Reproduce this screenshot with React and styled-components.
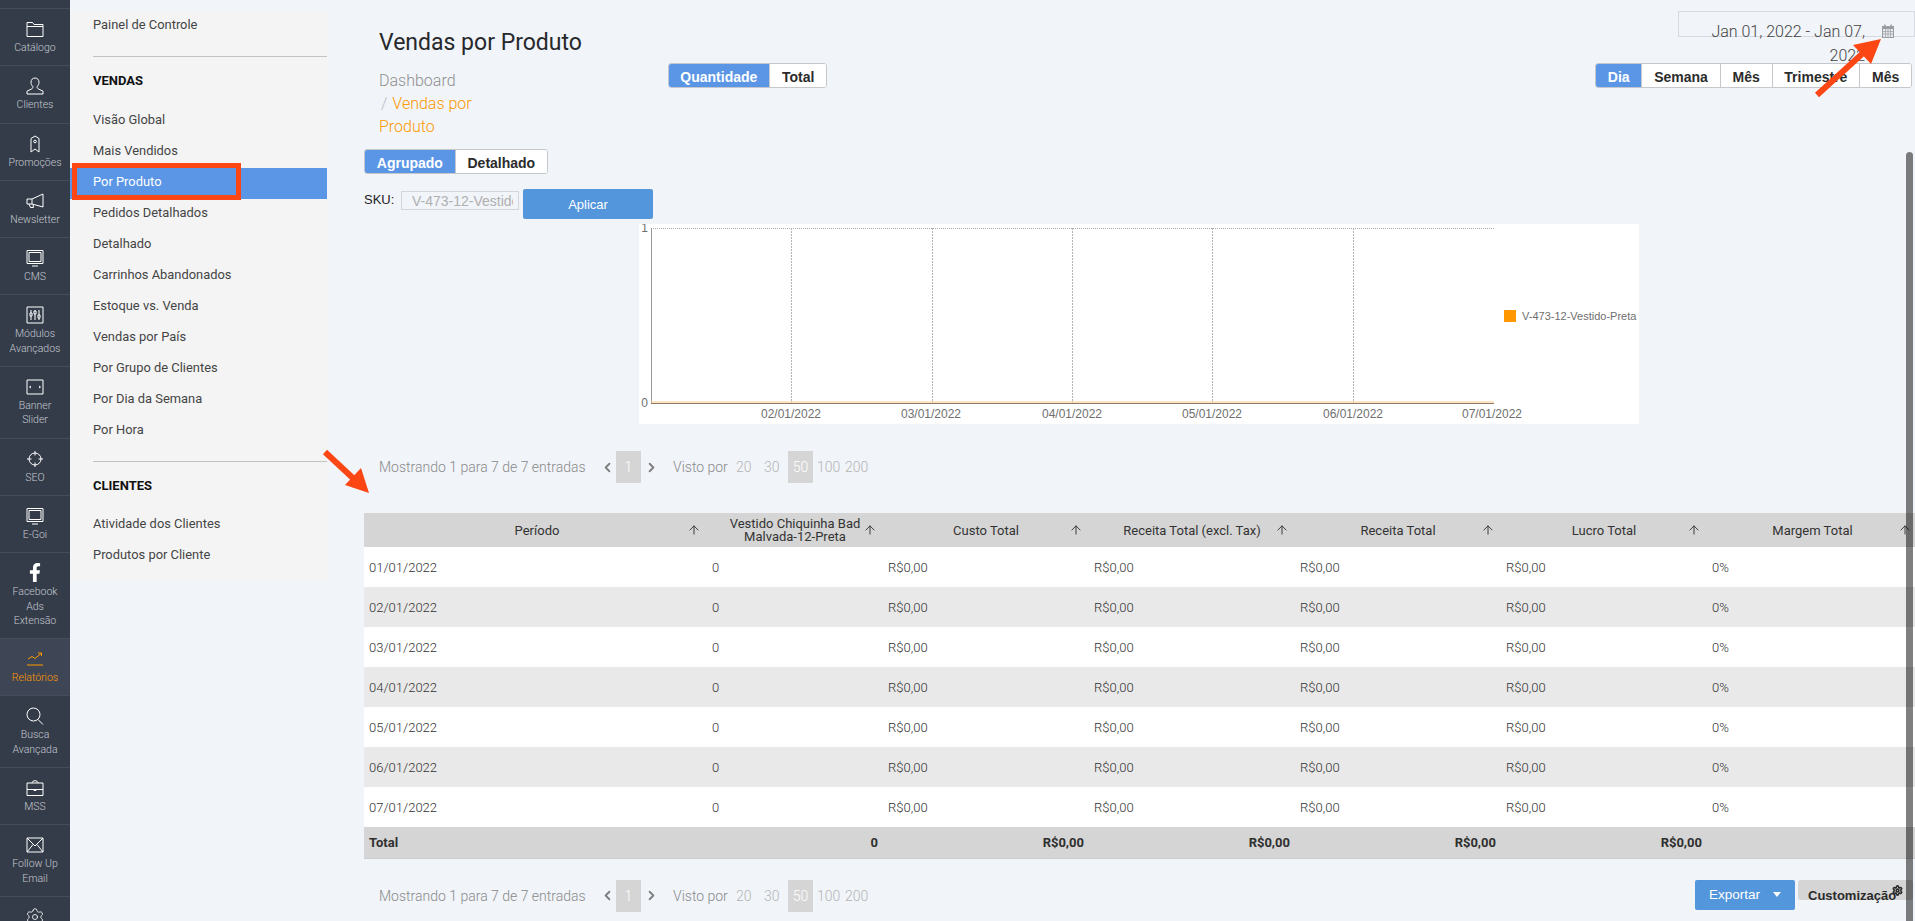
import React from 'react';
import styled, { createGlobalStyle } from 'styled-components';
import { ArrowUp, ChevronLeft, ChevronRight, Settings } from 'lucide-react';
import { FaFacebookF } from 'react-icons/fa';

const GlobalStyle = createGlobalStyle`
  html, body {
    margin: 0;
    height: 100%;
    overflow: hidden;
    background: #f1f4f9;
  }
  body {
    font-family: Roboto, "Liberation Sans", sans-serif;
    color: #333;
  }
  * {
    box-sizing: border-box;
  }
`;

const Page = styled.div`
  position: relative;
  display: flex;
  width: 1915px;
  height: 921px;
  overflow: hidden;
  background: #f1f4f9;
`;

/* left icon rail */
const Rail = styled.nav`
  flex: none;
  width: 70px;
  height: 921px;
  padding-top: 8px;
  overflow: hidden;
  background: #343c4a;
`;

const RailItem = styled.a`
  display: block;
  padding: 10px 0 11px;
  margin-bottom: -1px;
  border-top: 1px solid #454d5b;
  text-align: center;
  color: ${(p) => (p.$active ? '#ff9800' : '#ffffff')};
  background: ${(p) => (p.$active ? '#3e4655' : 'transparent')};
`;

const RailIcon = styled.svg`
  display: block;
  width: 20px;
  height: 20px;
  margin: 0 auto 2px;
  fill: none;
  stroke: currentColor;
  stroke-width: 1;
`;

const FacebookIcon = styled(FaFacebookF)`
  display: block;
  width: 20px;
  height: 19px;
  margin: 0 auto 3px;
`;

const RailGear = styled(Settings)`
  display: block;
  width: 20px;
  height: 20px;
  margin: 0 auto 2px;
`;

const RailLabel = styled.div`
  font-size: 10.5px;
  font-weight: 300;
  line-height: 14.3px;
  color: ${(p) => (p.$active ? '#ff9800' : '#c4c8ce')};
`;

/* secondary menu */
const Menu = styled.aside`
  flex: none;
  align-self: flex-start;
  width: 257px;
  margin-top: 10px;
  padding: 1px 0 9px;
  background: #f4f4f5;
`;

const MenuRow = styled.a`
  display: block;
  height: 31px;
  padding: 0 0 3px 23px;
  font-size: 12.9px;
  line-height: 28px;
  color: ${(p) => (p.$active ? '#ffffff' : '#444444')};
  background: ${(p) => (p.$active ? '#5b96e6' : 'transparent')};
`;

const MenuRule = styled.div`
  height: 1px;
  margin: ${(p) => p.$top}px 0 14px 23px;
  background: #c2c2c2;
`;

const MenuHead = styled.div`
  padding-left: 23px;
  margin-bottom: ${(p) => p.$gap}px;
  font-size: 13px;
  font-weight: 700;
  line-height: 20px;
  color: #111;
`;

/* main column */
const Main = styled.main`
  flex: none;
  width: 1588px;
`;

const Header = styled.header`
  display: flex;
  height: 149px;
  padding-left: 52px;
`;

const TitleBlock = styled.div`
  flex: none;
  width: 288.500px;
  padding-top: 29px;
`;

const Title = styled.h1`
  margin: 0 0 12px;
  font-size: 23px;
  font-weight: 400;
  line-height: 28px;
  white-space: nowrap;
  color: #26282c;
`;

const Crumbs = styled.div`
  width: 120px;
  font-size: 16px;
  line-height: 23px;
`;

const CrumbLink = styled.div`
  color: #8f8f8f;
  font-weight: 300;
`;

const CrumbCurrent = styled.div`
  color: #ff9800;
  font-weight: 300;
  &::before {
    content: '/';
    padding: 0 5px 0 2px;
    color: #bbb;
  }
`;

const Group = styled.div`
  display: inline-flex;
  flex: none;
  align-self: flex-start;
  height: 25px;
  margin-top: ${(p) => p.$top || 0}px;
  overflow: hidden;
  background: #fff;
  border: 1px solid #c4c7cc;
  border-radius: 3px;
`;

const GroupButton = styled.div`
  padding: 0 11.800px;
  font-family: "Liberation Sans", sans-serif;
  font-size: 14px;
  font-weight: 700;
  line-height: 27px;
  color: ${(p) => (p.$active ? '#fff' : '#2b2b2b')};
  background: ${(p) => (p.$active ? '#5b96e6' : '#fff')};
  & + & {
    border-left: 1px solid #c4c7cc;
  }
`;

const HeaderRight = styled.div`
  display: flex;
  flex-direction: column;
  align-items: flex-end;
  margin-left: auto;
  padding-top: 11px;
`;

const DateBox = styled.div`
  position: relative;
  width: 237px;
  height: 26px;
  margin-bottom: 26px;
  border: 1px solid #d6dae0;
`;

const DateText = styled.div`
  width: 186px;
  padding: 8px 0 0 30px;
  font-size: 16px;
  font-weight: 300;
  line-height: 24px;
  text-align: right;
  color: #444;
`;

const CalendarIcon = styled.svg`
  position: absolute;
  top: 12px;
  right: 19px;
  width: 14px;
  height: 14px;
`;

const PeriodGroup = styled(Group)`
  margin-right: 3px;
`;

const ToggleRow = styled.div`
  display: flex;
  padding-left: 37px;
`;

const SkuRow = styled.div`
  display: flex;
  align-items: flex-start;
  height: 30px;
  margin-top: 15px;
  padding-left: 37px;
`;

const SkuLabel = styled.label`
  width: 37px;
  padding-top: 1px;
  font-family: "Liberation Sans", sans-serif;
  font-size: 13px;
  line-height: 20px;
  color: #222;
`;

const SkuInput = styled.input`
  width: 118px;
  height: 19px;
  margin: 2px 4px 0 0;
  padding: 0 5px 0 10px;
  font-family: "Liberation Sans", sans-serif;
  font-size: 14px;
  background: transparent;
  border: 1px solid #d4d7da;
  outline: none;
  &::placeholder {
    color: #b0b0b0;
    opacity: 1;
  }
`;

const ApplyButton = styled.button`
  width: 130px;
  height: 30px;
  padding: 0;
  font-family: "Liberation Sans", sans-serif;
  font-size: 13px;
  color: #fff;
  background: #5396db;
  border: 0;
  border-radius: 2px;
`;

const ChartCard = styled.div`
  width: 1000px;
  height: 200px;
  margin: 5px 0 0 312px;
  background: #fff;
`;

const ChartText = styled.text`
  font-family: "Liberation Sans", sans-serif;
  font-size: ${(p) => p.$size || 12}px;
  fill: #6f6f6f;
`;

/* pager */
const Pager = styled.div`
  display: flex;
  align-items: center;
  height: 32px;
  padding-left: 52px;
  margin-top: ${(p) => p.$top || 0}px;
  font-size: 14px;
  font-weight: 300;
  color: #8a8a8a;
`;

const PagerCount = styled.span`
  width: 220px;
  white-space: nowrap;
`;

const PagerArrow = styled.span`
  display: flex;
  justify-content: center;
  width: ${(p) => p.$w}px;
  color: #808080;
`;

const PagerBox = styled.span`
  width: 25px;
  line-height: 32px;
  text-align: center;
  color: #fff;
  background: #d5d5d5;
`;

const PagerLabel = styled.span`
  width: 63px;
  margin-left: 12px;
  white-space: nowrap;
`;

const SizeLink = styled.span`
  width: ${(p) => p.$w}px;
  margin-right: ${(p) => p.$gap}px;
  color: #b5b5b5;
  white-space: nowrap;
`;

const SizeBox = styled(PagerBox)`
  margin-right: 4px;
`;

/* table */
const Table = styled.table`
  width: 1551px;
  margin: 30px 0 0 37px;
  border-collapse: collapse;
  table-layout: fixed;
  font-size: 13px;
`;

const Th = styled.th`
  width: ${(p) => p.$w}px;
  height: 34px;
  padding: 0;
  font-weight: 400;
  color: #333;
  background: #d5d5d5;
`;

const ThInner = styled.div`
  display: flex;
  align-items: center;
  padding: 0 3px 0 23px;
`;

const ThLabel = styled.div`
  flex: 1;
  font-size: 13px;
  line-height: 13px;
  text-align: center;
`;

const Td = styled.td`
  height: 40px;
  padding: 0 0 0 ${(p) => (p.$first ? 5 : 8)}px;
  font-weight: 300;
  color: #333;
`;

const Row = styled.tr`
  background: ${(p) => (p.$odd ? '#e9e9e9' : '#fff')};
`;

const TotalRow = styled.tr`
  background: #d5d5d5;
  border-bottom: 1px solid #c9ccd0;
`;

const TotalCell = styled.td`
  height: 31px;
  padding: ${(p) => (p.$first ? '0 0 0 5px' : '0 2px 0 0')};
  font-weight: 700;
  text-align: ${(p) => (p.$first ? 'left' : 'right')};
  color: #2f2f2f;
`;

const Footer = styled.div`
  display: flex;
  margin-top: 21px;
`;

const FooterActions = styled.div`
  display: flex;
  gap: 3px;
  margin-left: auto;
  margin-right: 2px;
`;

const ExportButton = styled.div`
  display: flex;
  align-items: center;
  justify-content: center;
  gap: 13px;
  width: 100px;
  height: 30px;
  font-family: "Liberation Sans", sans-serif;
  font-size: 13.500px;
  color: #fff;
  background: #5396db;
  border-radius: 2px;
`;

const Caret = styled.span`
  width: 0;
  height: 0;
  border-left: 4px solid transparent;
  border-right: 4px solid transparent;
  border-top: 5px solid #fff;
`;

const CustomBox = styled.div`
  position: relative;
  width: 115px;
  height: 20px;
  padding-left: 10px;
  font-family: "Liberation Sans", sans-serif;
  font-size: 13px;
  font-weight: 700;
  line-height: 32px;
  white-space: nowrap;
  color: #2b2b2b;
  background: #d5d5d5;
  border-radius: 3px;
`;

const CustomGear = styled(Settings)`
  position: absolute;
  top: 5px;
  right: 10px;
`;

const Scrollbar = styled.div`
  position: absolute;
  top: 152px;
  right: 2px;
  bottom: 0;
  width: 7px;
  background: rgba(0, 0, 0, 0.5);
  border-radius: 4px 4px 0 0;
`;

/* red annotations laid over the screenshot */
const MarkFrame = styled.div`
  position: absolute;
  left: 72px;
  top: 163px;
  width: 169px;
  height: 37px;
  border: 5px solid #fc4614;
`;

const MarkArrows = styled.svg`
  position: absolute;
  left: 0;
  top: 0;
  width: 1915px;
  height: 921px;
  pointer-events: none;
`;

const railItems = [
  {
    id: 'catalogo',
    label: ['Catálogo'],
    icon: <path d="M2 3.500h5.500l1.500 2h9v12H2zM2 7.500h16" />,
  },
  {
    id: 'clientes',
    label: ['Clientes'],
    icon: <path d="M10 2c-2.400 0-4 1.800-4 4.200 0 1.800.8 3.300 1.800 4.300.3 1.300-.3 2-1.300 2.500L2 15.200V18h16v-2.800L13.500 13c-1-.5-1.600-1.200-1.300-2.500 1-1 1.800-2.500 1.800-4.300C14 3.800 12.400 2 10 2z" />,
  },
  {
    id: 'promocoes',
    label: ['Promoções'],
    icon: (
      <>
        <path d="M6 4.500 10 2l4 2.500V18l-4-3-4 3z" />
        <circle cx="10" cy="7.500" r="1.300" />
      </>
    ),
  },
  {
    id: 'newsletter',
    label: ['Newsletter'],
    icon: <path d="M2 8h5L18 3v13l-11-3H2zM7 8v5M4 13l1.500 3.500h3L8 13.500" />,
  },
  {
    id: 'cms',
    label: ['CMS'],
    icon: <path d="M2 2.500h16v13H2zM4 4.500h12v9H4zM7 18h6" />,
  },
  {
    id: 'modulos',
    label: ['Módulos', 'Avançados'],
    icon: <path d="M2 2h16v16H2zM6 5v3M6 11v4M10 5v1M10 9v6M14 5v5M14 13v2M5 8h2v3H5zM9 6h2v3H9zM13 10h2v3h-2z" />,
  },
  {
    id: 'banner',
    label: ['Banner', 'Slider'],
    icon: <path d="M2 3h16v14H2zM6 9l-1.500 1L6 11M14 9l1.500 1L14 11" />,
  },
  {
    id: 'seo',
    label: ['SEO'],
    icon: (
      <>
        <circle cx="10" cy="10" r="6" />
        <path d="M10 2v4.500M10 13.500V18M2 10h4.500M13.500 10H18" />
      </>
    ),
  },
  {
    id: 'egoi',
    label: ['E-Goi'],
    icon: <path d="M2 2.500h16v13H2zM4 4.500h12v9H4zM7 18h6" />,
  },
  { id: 'facebook', label: ['Facebook', 'Ads', 'Extensão'], facebook: true },
  {
    id: 'relatorios',
    label: ['Relatórios'],
    active: true,
    icon: <path d="M3 10l4-2.500 3 2 6-5M13 4h3.500v3M2 16h16" />,
  },
  {
    id: 'busca',
    label: ['Busca', 'Avançada'],
    icon: <path d="M15 8.500a6.500 6.500 0 1 1-13 0 6.500 6.500 0 0 1 13 0zM13 13.500l5 5" />,
  },
  {
    id: 'mss',
    label: ['MSS'],
    icon: <path d="M2 5h16v12.500H2zM2 11.500h16M7 5c0-3 6-3 6 0M9 11v1.500h2V11" />,
  },
  {
    id: 'followup',
    label: ['Follow Up', 'Email'],
    icon: <path d="M2 3h16v14H2zM2 3l8 8 8-8M2 17l6-7.500M18 17l-6-7.500" />,
  },
  { id: 'settings', label: [], gear: true },
];

const vendasLinks = [
  'Visão Global',
  'Mais Vendidos',
  'Por Produto',
  'Pedidos Detalhados',
  'Detalhado',
  'Carrinhos Abandonados',
  'Estoque vs. Venda',
  'Vendas por País',
  'Por Grupo de Clientes',
  'Por Dia da Semana',
  'Por Hora',
];

const columns = [
  { label: 'Período', w: 340 },
  { label: 'Vestido Chiquinha Bad Malvada-12-Preta', w: 176 },
  { label: 'Custo Total', w: 206 },
  { label: 'Receita Total (excl. Tax)', w: 206 },
  { label: 'Receita Total', w: 206 },
  { label: 'Lucro Total', w: 206 },
  { label: 'Margem Total', w: 211 },
];

const days = ['01', '02', '03', '04', '05', '06', '07'];
const gridX = [152, 293, 433, 573, 714];
const tickX = [152, 292, 433, 573, 714, 853];

const PagerBar = ({ top }) => (
  <Pager $top={top}>
    <PagerCount>Mostrando 1 para 7 de 7 entradas</PagerCount>
    <PagerArrow $w={17}>
      <ChevronLeft size={15} strokeWidth={3} />
    </PagerArrow>
    <PagerBox>1</PagerBox>
    <PagerArrow $w={20}>
      <ChevronRight size={15} strokeWidth={3} />
    </PagerArrow>
    <PagerLabel>Visto por</PagerLabel>
    <SizeLink $w={15} $gap={13}>20</SizeLink>
    <SizeLink $w={16} $gap={8}>30</SizeLink>
    <SizeBox>50</SizeBox>
    <SizeLink $w={23} $gap={5}>100</SizeLink>
    <SizeLink $w={23} $gap={0}>200</SizeLink>
  </Pager>
);

const SalesChart = () => (
  <svg width="1000" height="200">
    <line x1="12" y1="4.500" x2="855" y2="4.500" stroke="#aaa" strokeDasharray="1 1" />
    <line x1="12.500" y1="4" x2="12.500" y2="179" stroke="#999" />
    {gridX.map((x) => (
      <line key={x} x1={x + 0.5} y1="4" x2={x + 0.5} y2="179" stroke="#b5b5b5" strokeDasharray="2 1" />
    ))}
    <line x1="12" y1="178" x2="855" y2="178" stroke="#ffc88a" />
    <line x1="12" y1="179.500" x2="855" y2="179.500" stroke="#8a7a66" />
    <ChartText x="9" y="8" textAnchor="end">1</ChartText>
    <ChartText x="9" y="183" textAnchor="end">0</ChartText>
    {tickX.map((x, i) => (
      <ChartText key={x} x={x} y="194" textAnchor="middle">
        {`${days[i + 1]}/01/2022`}
      </ChartText>
    ))}
    <rect x="865" y="86" width="12" height="12" fill="#ff9800" />
    <ChartText $size={11} x="883" y="96">V-473-12-Vestido-Preta</ChartText>
  </svg>
);

export default function App() {
  return (
    <Page>
      <GlobalStyle />
      <Rail>
        {railItems.map((item) => (
          <RailItem key={item.id} $active={item.active}>
            {item.facebook ? (
              <FacebookIcon />
            ) : item.gear ? (
              <RailGear strokeWidth={1} />
            ) : (
              <RailIcon viewBox="0 0 20 20">{item.icon}</RailIcon>
            )}
            {item.label.map((line) => (
              <RailLabel key={line} $active={item.active}>{line}</RailLabel>
            ))}
          </RailItem>
        ))}
      </Rail>

      <Menu>
        <MenuRow>Painel de Controle</MenuRow>
        <MenuRule $top={14} />
        <MenuHead $gap={15}>VENDAS</MenuHead>
        {vendasLinks.map((link) => (
          <MenuRow key={link} $active={link === 'Por Produto'}>{link}</MenuRow>
        ))}
        <MenuRule $top={14} />
        <MenuHead $gap={14}>CLIENTES</MenuHead>
        <MenuRow>Atividade dos Clientes</MenuRow>
        <MenuRow>Produtos por Cliente</MenuRow>
      </Menu>

      <Main>
        <Header>
          <TitleBlock>
            <Title>Vendas por Produto</Title>
            <Crumbs>
              <CrumbLink>Dashboard</CrumbLink>
              <CrumbCurrent>Vendas por Produto</CrumbCurrent>
            </Crumbs>
          </TitleBlock>
          <Group $top={63}>
            <GroupButton $active>Quantidade</GroupButton>
            <GroupButton>Total</GroupButton>
          </Group>
          <HeaderRight>
            <DateBox>
              <DateText>Jan 01, 2022 - Jan 07, 2022</DateText>
              <CalendarIcon viewBox="0 0 14 14">
                <path d="M1 2h12v12H1z" fill="#9a9da3" />
                <path d="M3 0.500h1.500v2.500H3zM9.500 0.500H11v2.500H9.500z" fill="#9a9da3" />
                <path d="M2 5h10v8H2z" fill="#e4e6ea" />
                <path d="M4.500 5v8M7 5v8M9.500 5v8M2 7.500h10M2 10h10" stroke="#a5a8ad" strokeWidth="0.8" />
              </CalendarIcon>
            </DateBox>
            <PeriodGroup>
              <GroupButton $active>Dia</GroupButton>
              <GroupButton>Semana</GroupButton>
              <GroupButton>Mês</GroupButton>
              <GroupButton>Trimestre</GroupButton>
              <GroupButton>Mês</GroupButton>
            </PeriodGroup>
          </HeaderRight>
        </Header>

        <ToggleRow>
          <Group>
            <GroupButton $active>Agrupado</GroupButton>
            <GroupButton>Detalhado</GroupButton>
          </Group>
        </ToggleRow>

        <SkuRow>
          <SkuLabel>SKU:</SkuLabel>
          <SkuInput placeholder="V-473-12-Vestido-Preta" />
          <ApplyButton>Aplicar</ApplyButton>
        </SkuRow>

        <ChartCard>
          <SalesChart />
        </ChartCard>

        <PagerBar top={27} />

        <Table>
          <thead>
            <tr>
              {columns.map((col) => (
                <Th key={col.label} $w={col.w}>
                  <ThInner>
                    <ThLabel>{col.label}</ThLabel>
                    <ArrowUp size={14} strokeWidth={1.6} />
                  </ThInner>
                </Th>
              ))}
            </tr>
          </thead>
          <tbody>
            {days.map((day, i) => (
              <Row key={day} $odd={i % 2 === 1}>
                <Td $first>{`${day}/01/2022`}</Td>
                <Td>0</Td>
                <Td>R$0,00</Td>
                <Td>R$0,00</Td>
                <Td>R$0,00</Td>
                <Td>R$0,00</Td>
                <Td>0%</Td>
              </Row>
            ))}
            <TotalRow>
              <TotalCell $first>Total</TotalCell>
              <TotalCell>0</TotalCell>
              <TotalCell>R$0,00</TotalCell>
              <TotalCell>R$0,00</TotalCell>
              <TotalCell>R$0,00</TotalCell>
              <TotalCell>R$0,00</TotalCell>
              <TotalCell />
            </TotalRow>
          </tbody>
        </Table>

        <Footer>
          <PagerBar />
          <FooterActions>
            <ExportButton>
              Exportar
              <Caret />
            </ExportButton>
            <CustomBox>
              Customização
              <CustomGear size={11} strokeWidth={3.5} />
            </CustomBox>
          </FooterActions>
        </Footer>
      </Main>

      <Scrollbar />
      <MarkFrame />
      <MarkArrows viewBox="0 0 1915 921">
        <path d="M1817 95 1862 54" stroke="#fc4614" strokeWidth="6" fill="none" />
        <path d="M1881 39 1853 45 1871 64z" fill="#fc4614" />
        <path d="M325 452 355 480" stroke="#fc4614" strokeWidth="6" fill="none" />
        <path d="M369 493 361 468 345 485z" fill="#fc4614" />
      </MarkArrows>
    </Page>
  );
}
